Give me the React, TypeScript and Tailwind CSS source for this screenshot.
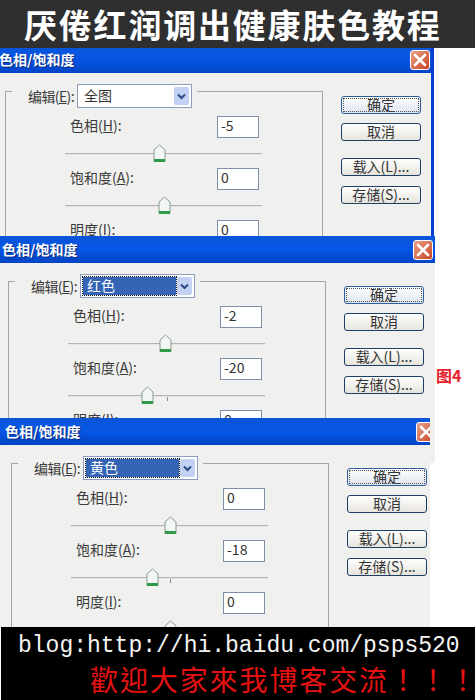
const cjk = "font-['Noto_Sans_CJK_SC',sans-serif]";

function Thumb() {
  return (
    <svg width="13" height="19" viewBox="0 0 13 19" className="block">
      <path d="M6.5 1 L12 6 V17.5 H1 V6 Z" fill="#f2f7f3" stroke="#8a9a94" strokeWidth="1" />
      <rect x="1" y="15" width="11" height="3" fill="#2e9a4a" />
    </svg>
  );
}

function SliderRow({ label, hotkey, value }: { label: string; hotkey: string; value: number }) {
  return (
    <>
      <div className="flex items-center justify-between ml-[59px] w-[194px] h-[22px]">
        <span className="pl-[5px] pb-[4px] whitespace-nowrap text-[14px] leading-none text-[#3a3a3a]">
          {label}(<u>{hotkey}</u>):
        </span>
        <div className="w-[42px] h-[22px] bg-white border border-[#7f8fa9] flex items-center pl-[3px] pb-[3px] text-[14px] text-[#333]">
          {value}
        </div>
      </div>
      <div className="relative ml-[59px] w-[197px] h-[30px]">
        <div className="absolute left-0 right-0 top-[15px] h-[2px] bg-gradient-to-b from-[#9c9c9c] to-[#ffffff]" />
        {value !== 0 && <div className="absolute left-[99px] top-[17px] w-px h-[4px] bg-[#8a8a8a]" />}
        <div className="absolute top-[6px]" style={{ left: 93 + value }}>
          <Thumb />
        </div>
      </div>
    </>
  );
}

function PsButton({ children, focused }: { children: string; focused?: boolean }) {
  return (
    <div
      className={
        focused
          ? "w-[80px] h-[18px] flex items-center justify-center pb-[2px] rounded-[3px] border border-[#2d5f9e] bg-gradient-to-b from-[#fdfdfb] to-[#dfe6f2] outline-1 outline-dotted outline-offset-[-3px] outline-[#555] text-[14px] leading-none text-[#333]"
          : "w-[80px] h-[18px] flex items-center justify-center pb-[2px] rounded-[3px] border border-[#1d3f66] bg-gradient-to-b from-[#ffffff] to-[#e6e4dc] text-[14px] leading-none text-[#333]"
      }
    >
      {children}
    </div>
  );
}

function CloseButton() {
  return (
    <div className="w-[20px] h-[20px] shrink-0 flex items-center justify-center rounded-[3px] border border-white bg-gradient-to-br from-[#e8a088] to-[#c8401c]">
      <svg width="14" height="14" viewBox="0 0 14 14">
        <path d="M2 2 L12 12 M12 2 L2 12" stroke="#fff" strokeWidth="2.6" strokeLinecap="round" />
      </svg>
    </div>
  );
}

type DialogProps = {
  frame: string;
  shift: string;
  mode: string;
  selected?: boolean;
  values: [number, number, number];
};

function HueDialog({ frame, shift, mode, selected, values }: DialogProps) {
  return (
    <div className={`${frame} ${cjk} overflow-hidden bg-[#f0f0ee] shrink-0`}>
      <div className={`${shift} h-[27px] bg-gradient-to-b from-[#0a55d8] via-[#0656e6] to-[#0344c4]`}>
        <div className="w-[431px] h-[27px] flex items-center justify-between pr-[1px]">
          <span className="-ml-[1px] pb-[2px] text-[14px] font-bold text-white leading-none [text-shadow:1px_1px_1px_#0a2a80]">
            色相/饱和度
          </span>
          <CloseButton />
        </div>
      </div>
      <div className={`${shift} w-max flex items-start`}>
        <div className="ml-[5px] mt-[18px] w-[318px] h-[300px] border border-b-0 border-[#a4a4a4]">
          <div className="-mt-[8px] ml-[6px] w-fit flex items-center pl-[16px] pr-[5px] h-[24px] bg-[#f0f0ee]">
            <span className="w-[49px] whitespace-nowrap text-[14px] tracking-[-0.6px] leading-none text-[#3a3a3a]">
              编辑(<u>E</u>):
            </span>
            <div className="w-[115px] h-[24px] bg-white border border-[#8b9dc0] flex items-center p-[2px]">
              <div
                className={
                  selected
                    ? "flex-1 h-full bg-[#3564b4] outline-1 outline-dotted outline-[#111] text-white text-[14px] leading-[17px] pl-[4px]"
                    : "flex-1 h-full text-[#333] text-[14px] leading-[17px] pl-[4px]"
                }
              >
                {mode}
              </div>
              <div className="ml-[1px] w-[15px] h-full rounded-[2px] bg-[#c3d2f4] flex items-center justify-center">
                <svg width="9" height="7" viewBox="0 0 9 7">
                  <path d="M1 1.5 L4.5 5 L8 1.5" fill="none" stroke="#2c4a86" strokeWidth="2" />
                </svg>
              </div>
            </div>
          </div>
          <div className="mt-[8px]">
            <SliderRow label="色相" hotkey="H" value={values[0]} />
            <SliderRow label="饱和度" hotkey="A" value={values[1]} />
            <SliderRow label="明度" hotkey="I" value={values[2]} />
          </div>
        </div>
        <div className="ml-[18px] mt-[23px] flex flex-col">
          <PsButton focused>确定</PsButton>
          <div className="mt-[9px]">
            <PsButton>取消</PsButton>
          </div>
          <div className="mt-[17px]">
            <PsButton>载入(L)...</PsButton>
          </div>
          <div className="mt-[10px]">
            <PsButton>存储(S)...</PsButton>
          </div>
        </div>
      </div>
    </div>
  );
}

export default function App() {
  return (
    <div className="w-[475px] h-[700px] overflow-hidden bg-white">
      <div className={`${cjk} relative z-10 h-[48px] bg-[#2f2f2f] flex items-center pl-[24px]`}>
        <h1 className="text-[33px] font-bold leading-none tracking-[1.8px] whitespace-nowrap text-white">
          厌倦红润调出健康肤色教程
        </h1>
      </div>

      <div className="-mt-[2px]">
        <HueDialog
          frame="w-[434px] h-[190px] border-r-[3px] border-[#0a3fd0]"
          shift="pl-0"
          mode="全图"
          values={[-5, 0, 0]}
        />
      </div>

      <div className="flex items-start">
        <HueDialog
          frame="w-[435px] h-[227px]"
          shift="pl-[3px]"
          mode="红色"
          selected
          values={[-2, -20, 0]}
        />
        <span className={`${cjk} mt-[131px] ml-[1px] text-[16px] font-bold leading-none text-[#e8202a]`}>图4</span>
      </div>

      <div className="relative -mt-[45px]">
        <HueDialog
          frame="w-[430px] h-[209px]"
          shift="pl-[6px]"
          mode="黄色"
          selected
          values={[0, -18, 0]}
        />
      </div>

      <div className="ml-[1px] h-[73px] bg-black flex flex-col">
        <div className="mt-[5px] pl-[17px] font-['Liberation_Mono',monospace] text-[23px] leading-[28px] text-[#f4f4f4] whitespace-nowrap">
          blog:http://hi.baidu.com/psps520
        </div>
        <div className="mt-[3px] pl-[89px] font-['Noto_Sans_CJK_TC',sans-serif] text-[28px] leading-[32px] tracking-[1.9px] text-[#e41212] whitespace-nowrap">
          歡迎大家來我博客交流！！！
        </div>
      </div>
    </div>
  );
}
